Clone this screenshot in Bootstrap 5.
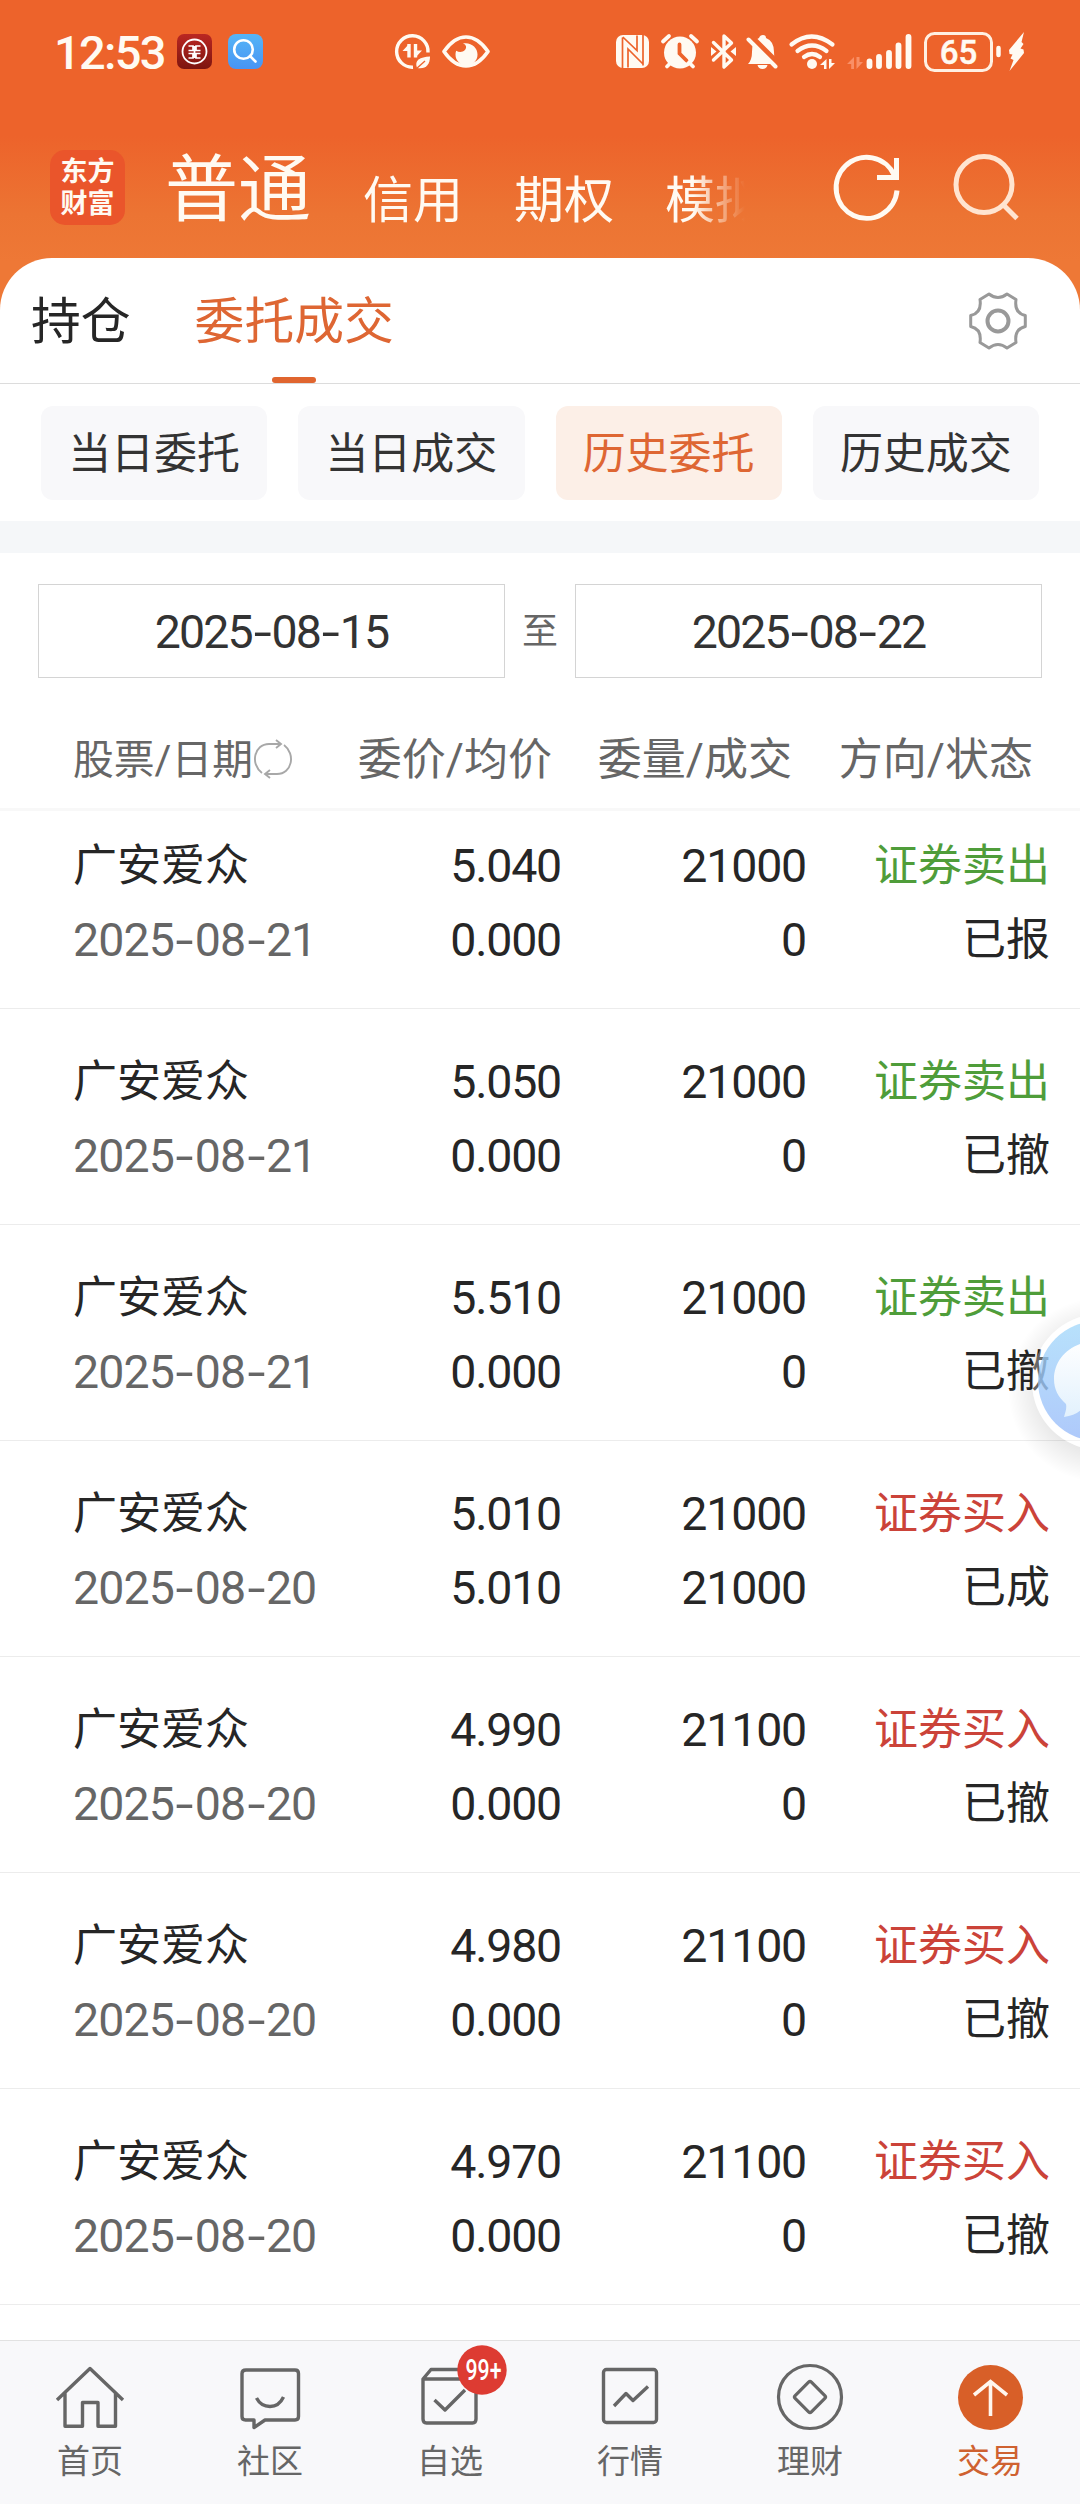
<!DOCTYPE html>
<html lang="zh-CN">
<head>
<meta charset="utf-8">
<meta name="viewport" content="width=device-width, initial-scale=1">
<title>委托成交</title>
<link href="https://cdn.jsdelivr.net/npm/bootstrap@5.3.0/dist/css/bootstrap.min.css" rel="stylesheet">
<style>
body{font-family:Roboto,"Noto Sans CJK SC",sans-serif;font-size:44px;line-height:1;color:#262626;background:#fff;overflow-x:hidden}
.screen{width:1080px;height:2504px;overflow:hidden}
.hero{height:310px;background:linear-gradient(#ed632b 0,#ed632b 136px,#ec7433 215px,#ee7836 262px);color:#fffaf2}
.statusbar{height:104px}
.clock{font-size:47px;font-weight:500;line-height:106px;width:121px;padding-left:54px;letter-spacing:-1.7px}
.brandbar{height:154px;padding-left:50px}
.logo{width:75px;height:75px;margin-top:46px;border-radius:15px;background:#ea552b;font-size:27px;font-weight:700;line-height:32px;padding-top:6px}
.acct{font-size:50px;line-height:60px;margin-top:67px}
.acct-main{font-size:73px;line-height:84px;margin:44px 0 0 40px;width:149px}
.fade-out{width:80px;-webkit-mask-image:linear-gradient(90deg,#000 35%,transparent 100%);mask-image:linear-gradient(90deg,#000 35%,transparent 100%)}
.sheet{margin-top:-52px;border-radius:52px 52px 0 0;background:#fff}
.tabs-top{height:126px;border-bottom:1px solid #dcdcdc;padding-left:31px;font-size:49.8px}
.tabs-top .tab{line-height:129px;height:126px}
.tab-on{color:#de6633}
.tab-on::after{content:"";position:absolute;left:50%;margin-left:-22px;bottom:1px;width:44px;height:6px;border-radius:3px;background:#e0652f}
.pills{padding:22px 41px 21px;gap:31px;height:137px}
.pill{border:0;border-radius:12px;background:#f8f8fa;font-size:43px;line-height:97px;height:94px;color:#333}
.pill-on{background:#fcefe7;color:#de6633}
.band{height:32px;background:#f5f7f9}
.range{padding:31px 38px 0;height:125px}
.datebox{width:467px;height:94px;border:1px solid #d4d4d4;line-height:94px;font-size:46.5px;letter-spacing:-1.9px;color:#333}
.to{font-size:36px;line-height:97px;color:#666}
.dash{display:inline-block;transform:scaleX(1.4);margin:0 4.4px}
.thead-row{height:133px;border-bottom:3px solid #f8f8f8;color:#666;line-height:165px}
.thead-row .c1{font-size:40.8px}
.cA{width:287px;padding-left:73px;flex:none}
.cB{width:274px;flex:none}.cC{width:245px;flex:none}.cD{width:244px;flex:none}
.order{height:216px;border-bottom:1px solid #ececec;padding-top:36px;line-height:74px}
.order:first-child{height:198px;padding-top:18px}
.num{font-size:46.5px;letter-spacing:-1.2px}
.date{font-size:46.5px;letter-spacing:-.9px;color:#666;white-space:nowrap}
.sell{color:#4f9d3a}.buy{color:#cb4339}
.tabbar{height:164px;border-top:1px solid #e2e2e2;background:#f8f8fa;color:#666;font-size:33px}
.tabbar .item{width:180px;padding-top:19px}
.tabbar .lbl{line-height:42px;margin-top:3px}
.tabbar .active{color:#cf6130}
.floater{right:0;top:1290px}
svg{display:block;flex:none}
</style>
<script src="https://cdn.jsdelivr.net/npm/bootstrap@5.3.0/dist/js/bootstrap.bundle.min.js"></script>
</head>
<body>
<div class="screen position-relative d-flex flex-column">
<header class="hero flex-shrink-0">
  <div class="statusbar d-flex align-items-start">
    <div class="clock flex-shrink-0">12:53</div>
    <svg class="ms-auto" width="905" height="104" viewBox="175 0 905 104">
      <defs>
        <linearGradient id="red" x2="0" y2="1"><stop stop-color="#ba2722"/><stop offset="1" stop-color="#7d150f"/></linearGradient>
        <linearGradient id="blu" x2="0" y2="1"><stop stop-color="#56b5f6"/><stop offset="1" stop-color="#4794f4"/></linearGradient>
      </defs>
      <rect x="177" y="34" width="35" height="35" rx="7" fill="url(#red)"/>
      <g fill="none" stroke="#fff"><circle cx="194.500" cy="51.500" r="12" stroke-width="1.800"/><path d="M188.500 46h4.500v4.500h-4.500M188.500 53.500h4.500V58h-4.500M200.500 46H196v4.500h4.500M200.500 53.500H196V58h4.500M194.500 46v12" stroke-width="1.700"/></g>
      <rect x="228" y="34" width="35" height="35" rx="8" fill="url(#blu)"/>
      <g fill="none" stroke="#fff" stroke-width="2.600" stroke-linecap="round"><circle cx="243.500" cy="49.500" r="9.300"/><path d="M250 56l5.500 5.500"/></g>
      <g fill="none" stroke="#fffaf2" stroke-width="3.600"><path d="M413 67.200A15.700 15.700 0 1 1 428 52.500" stroke-width="3.400"/><path d="M409 44V57.500M415.500 44V57.500" stroke-width="3.400"/></g>
      <path d="M409 44v7h-6.500zM415.500 57.500v-7h6.500z" fill="#fffaf2"/>
      <path d="M417 68c-3-8 3-11 13-11.500 0 8-4 13-13 11.500z" fill="#fffaf2"/><path d="M416 69l9-8" stroke="#ed632b" stroke-width="1.300"/>
      <path d="M444 51.500Q454 37 466 37t22 14.500Q478 66 466 66t-22-14.500z" fill="none" stroke="#fffaf2" stroke-width="3.700" stroke-linejoin="round"/>
      <path d="M463 43.500c8-1.500 14.500 4 14.500 11a11 11 0 0 1-22 0q0-2 .7-3.700c5 3 10.500 0 9.800-4.500q-.5-2-3-2.800z" fill="#fffaf2"/>
      <rect x="616" y="35" width="33" height="33" rx="7" fill="#fffaf2"/>
      <path d="M622.500 37.500V68M643 35V65.500M622.800 37L637 50.500V35.500M628 67.500V49l14.500 14.500" fill="none" stroke="#ed632b" stroke-width="1.700"/>
      <circle cx="680" cy="52.500" r="16" fill="#fffaf2"/>
      <path d="M679.500 44.500V53.500l7 7" fill="none" stroke="#ed632b" stroke-width="3.800" stroke-linecap="round"/>
      <path d="M663 41.500l6-5.500M697 41.500l-6-5.500M667 66.500l4-4M693 66.500l-4-4" stroke="#fffaf2" stroke-width="3.800" stroke-linecap="round"/>
      <path d="M713.500 42.500l18 17.500-7.500 7V36l7.500 7-18 17" fill="none" stroke="#fffaf2" stroke-width="3.400" stroke-linecap="round" stroke-linejoin="round"/>
      <path d="M711 47v9l5.500-4.500zM736 47v9l-5.500-4.500z" fill="#fffaf2"/>
      <path d="M748 64q4-4 4-12 0-12 7-14 1-3 4-3t3 3q8 3 8 14 0 8 3 12z" fill="#fffaf2"/>
      <path d="M757.500 65h10q-1 4-5 4t-5-4z" fill="#fffaf2"/>
      <path d="M746 46L757 33M751 36l28 28" stroke="#ed632b" stroke-width="5"/><path d="M748.500 39.500l27 27" stroke="#fffaf2" stroke-width="4" stroke-linecap="round"/>
      <g fill="none" stroke="#fffaf2" stroke-width="4.200" stroke-linecap="round"><path d="M791.500 44.500q20-16 41 0M797.500 51q14.500-11 29 0M804 57q8-6 16 0"/></g>
      <circle cx="812" cy="64" r="5" fill="#fffaf2"/>
      <path d="M820 65l6.500-6v10h-2.500v-4zM829 59v10l6-6h-3.500v-4z" fill="#fffaf2"/>
      <path d="M847 64l7-7v12h-2.800v-5zM856.500 57v12l6.500-7h-3.500v-5z" fill="#f98f66"/>
      <path d="M869.500 61.500v4.500M879 57v9M889 53v13M898.500 45.500V66M908.500 37v29" stroke="#fffaf2" stroke-width="5.800" stroke-linecap="round"/>
      <rect x="925.500" y="33.500" width="66" height="37" rx="9" fill="none" stroke="#fff0e2" stroke-width="3"/>
      <path d="M998.500 48v7" stroke="#fffaf2" stroke-width="4.500" stroke-linecap="round"/>
      <text x="958.500" y="64" text-anchor="middle" font-family="Roboto" font-weight="500" font-size="33" fill="#fffaf2" stroke="#fffaf2" stroke-width=".5">65</text>
      <path d="M1024 32l-15 18 .5 4 3 .5-2 4 3 1.500L1009.500 71 1024 53l-.5-3.500-3-1 3-4.500-2-2z" fill="#fffaf2"/>
    </svg>
  </div>
  <div class="brandbar d-flex align-items-start text-nowrap">
    <div class="logo text-center flex-shrink-0">东方<br>财富</div>
    <div class="acct-main flex-shrink-0">普通</div>
    <div class="acct" style="margin-left:49px">信用</div>
    <div class="acct" style="margin-left:51px">期权</div>
    <div class="acct fade-out overflow-hidden" style="margin-left:51px">模拟</div>
    <svg class="position-absolute end-0" width="260" height="100" viewBox="820 140 260 100" style="top:140px">
      <path d="M897 190.500A30.500 30.500 0 1 1 894.500 175.500" fill="none" stroke="#fffaf2" stroke-width="5"/>
      <path d="M896.500 158V177.500H877" fill="none" stroke="#fffaf2" stroke-width="5"/>
      <circle cx="984" cy="184.500" r="28" fill="none" stroke="#ffe4d0" stroke-width="5"/><path d="M1003 204.500l14 14" stroke="#ffe4d0" stroke-width="5"/>
    </svg>
  </div>
</header>

<main class="sheet flex-grow-1 position-relative d-flex flex-column">
  <nav class="tabs-top d-flex">
    <div class="tab">持仓</div>
    <div class="tab tab-on position-relative" style="margin-left:64px">委托成交</div>
    <svg class="ms-auto" width="62" height="62" viewBox="-31 -31 62 62" style="margin:32px 51px 0 0">
      <g fill="none" stroke="#999" stroke-width="3" stroke-linejoin="round"><circle r="10.500" stroke-width="4"/>
      <path d="M-9-27Q0-20 9-27L18-21.500Q16-8 27.300-5.500V5.500Q16 8 18 21.500L9 27Q0 20-9 27L-18 21.500Q-16 8-27.300 5.500V-5.500Q-16-8-18-21.500Z"/></g>
    </svg>
  </nav>
  <div class="pills d-flex">
    <button class="pill col p-0">当日委托</button><button class="pill col p-0">当日成交</button><button class="pill pill-on col p-0">历史委托</button><button class="pill col p-0">历史成交</button>
  </div>
  <div class="band"></div>
  <div class="range d-flex justify-content-between">
    <div class="datebox text-center">2025<span class="dash">-</span>08<span class="dash">-</span>15</div>
    <div class="to">至</div>
    <div class="datebox text-center">2025<span class="dash">-</span>08<span class="dash">-</span>22</div>
  </div>
  <div class="thead-row d-flex text-nowrap">
    <div class="cA c1 d-flex">股票/日期
      <svg width="42" height="42" viewBox="-21 -21 42 42" style="margin:60px 0 0 -1px"><g fill="none" stroke="#a8a8a8" stroke-width="1.900"><path d="M-11 14C-23 5-19-15-4-15H8M3-19l5 4-5 4M11-14C23-5 19 15 4 15H-8M-3 19l-5-4 5-4"/></g></svg>
    </div>
    <div class="cB text-end" style="padding-right:9px">委价/均价</div>
    <div class="cC text-end" style="padding-right:14px">委量/成交</div>
    <div class="cD text-end" style="padding-right:17px">方向/状态</div>
  </div>
  <section id="orders"></section>
</main>

<nav class="tabbar d-flex flex-shrink-0 position-relative text-center">
  <div class="item"><svg class="mx-auto" width="80" height="78" viewBox="-40 -28 80 78"><g fill="none" stroke="#666" stroke-width="3.400" stroke-linejoin="round"><path d="M-33 12L0-19.500 33 12M-25 5V38.300H-7.500V14.500H8V38.300H25.500V5"/></g></svg><div class="lbl">首页</div></div>
  <div class="item"><svg class="mx-auto" width="80" height="78" viewBox="-40 -28 80 78"><g fill="none" stroke="#666" stroke-width="3.400" stroke-linejoin="round"><path d="M-24-18H25q3.500 0 3.500 3.500V28.500q0 3.500-3.500 3.500H-5L-16 39.500V32H-24.500q-3.500 0-3.500-3.500V-14.500q0-3.500 4-3.500z"/><path d="M-13.500 10Q-9 18.500 0 18.500T13.500 9"/></g></svg><div class="lbl">社区</div></div>
  <div class="item"><svg class="mx-auto" width="80" height="78" viewBox="-40 -28 80 78"><g fill="none" stroke="#666" stroke-width="3.400" stroke-linejoin="round"><path d="M-27-9L-19-18.500H26V31q0 4-3.500 4H-23.500q-3.500 0-3.500-4zH26M-15.500 12L-5 22 15 2"/></g></svg><div class="lbl">自选</div></div>
  <div class="item"><svg class="mx-auto" width="80" height="78" viewBox="-40 -28 80 78"><g fill="none" stroke="#666" stroke-width="3.400" stroke-linejoin="round"><rect x="-26.500" y="-18.500" width="53" height="53" rx="3"/><path d="M-16 18L-4 5.500 3 12.500 18-1.500"/></g></svg><div class="lbl">行情</div></div>
  <div class="item"><svg class="mx-auto" width="80" height="78" viewBox="-40 -28 80 78"><g fill="none" stroke="#666" stroke-width="3.200"><circle cy="9" r="31.500"/><rect x="-11.500" y="-11.500" width="23" height="23" rx="2" transform="translate(0 9) rotate(45)"/></g></svg><div class="lbl">理财</div></div>
  <div class="item active"><svg class="mx-auto" width="80" height="78" viewBox="-40 -28 80 78"><circle cx=".5" cy="9.500" r="32.500" fill="#d85f28"/><path d="M.5 28V-6M-16 7L.5-6.500 17 7" fill="none" stroke="#fff6ee" stroke-width="3.600"/></svg><div class="lbl">交易</div></div>
  <svg class="position-absolute" width="60" height="50" viewBox="-5 0 60 50" style="left:452px;top:4px"><circle cx="25" cy="25" r="24.700" fill="#dd3b32"/><text x="26.500" y="34.500" text-anchor="middle" font-family="Roboto" font-weight="500" font-size="29" textLength="36" lengthAdjust="spacingAndGlyphs" fill="#fff">99+</text></svg>
</nav>

<svg class="floater position-absolute" width="90" height="190" viewBox="990 1290 90 190">
  <defs><linearGradient id="fb" x2="0" y2="1"><stop stop-color="#9cd6fa"/><stop offset="1" stop-color="#8fb4f9"/></linearGradient>
  <linearGradient id="fw" x2="0" y2="1"><stop stop-color="#fff"/><stop offset="1" stop-color="#e2f1fd"/></linearGradient>
  <radialGradient id="sh" gradientUnits="userSpaceOnUse" cx="1100" cy="1390" r="92"><stop offset=".66" stop-color="#000" stop-opacity=".09"/><stop offset="1" stop-color="#000" stop-opacity="0"/></radialGradient>
  <mask id="ring"><rect x="980" y="1280" width="120" height="210" fill="#fff"/><circle cx="1100" cy="1382" r="68" fill="#000"/></mask></defs>
  <circle cx="1100" cy="1390" r="92" fill="url(#sh)" mask="url(#ring)"/>
  <circle cx="1100" cy="1382" r="68" fill="#fff" opacity=".3"/>
  <circle cx="1098" cy="1381" r="60" fill="url(#fb)" opacity=".72"/>
  <path d="M1098 1341c-26 0-44 17-44 38 0 10 4 18 12 25 1 5-1 9-2 13 8-1 14-4 18-8h40v-68z" fill="url(#fw)"/>
</svg>
</div>
<script>
const orders = [
  ["2025-08-21","5.040","0.000","21000","0","卖出","已报"],
  ["2025-08-21","5.050","0.000","21000","0","卖出","已撤"],
  ["2025-08-21","5.510","0.000","21000","0","卖出","已撤"],
  ["2025-08-20","5.010","5.010","21000","21000","买入","已成"],
  ["2025-08-20","4.990","0.000","21100","0","买入","已撤"],
  ["2025-08-20","4.980","0.000","21100","0","买入","已撤"],
  ["2025-08-20","4.970","0.000","21100","0","买入","已撤"]
];
document.getElementById("orders").innerHTML = orders.map(([d,p,a,q,f,side,st]) => `
<div class="order d-flex">
  <div class="cA"><div>广安爱众</div><div class="date">${d.replaceAll("-",'<span class="dash">-</span>')}</div></div>
  <div class="cB text-end num"><div>${p}</div><div>${a}</div></div>
  <div class="cC text-end num"><div>${q}</div><div>${f}</div></div>
  <div class="cD text-end"><div class="${side === "卖出" ? "sell" : "buy"}">证券${side}</div><div>${st}</div></div>
</div>`).join("");
</script>
</body>
</html>
